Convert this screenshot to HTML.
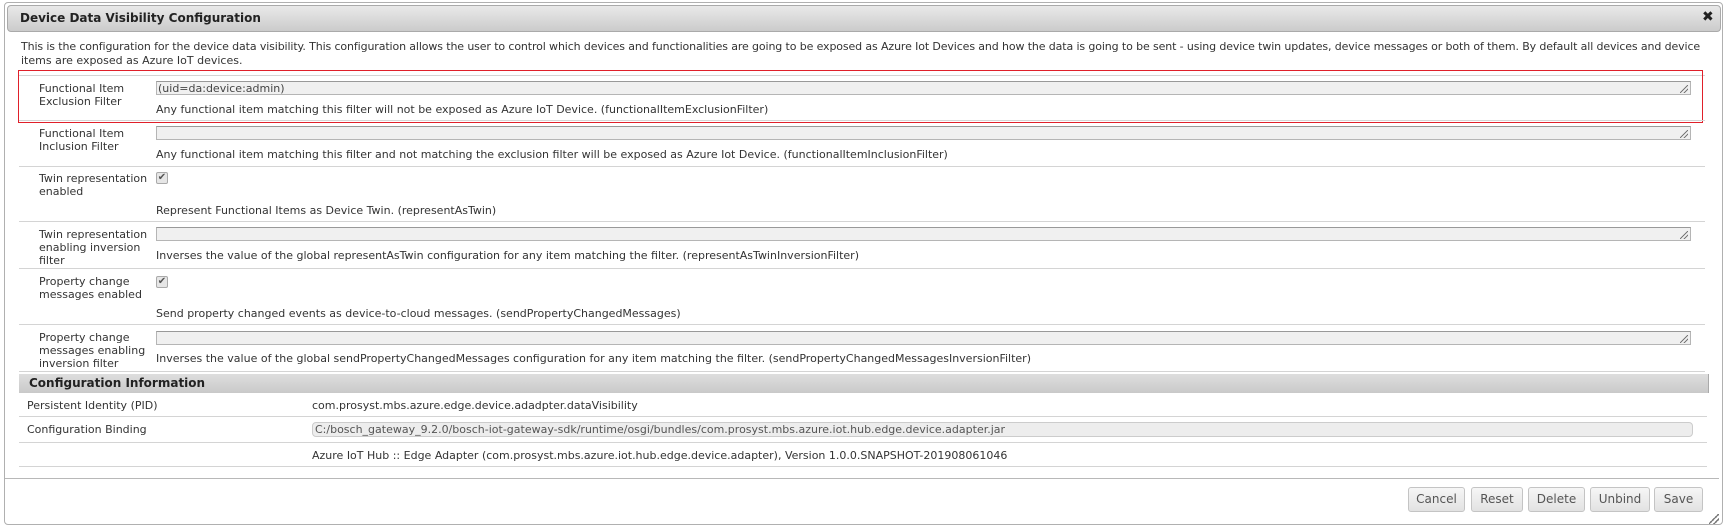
<!DOCTYPE html>
<html><head><meta charset="utf-8"><style>
*{margin:0;padding:0;box-sizing:border-box}
body{width:1725px;height:526px;background:#fff;font-family:"DejaVu Sans","Liberation Sans",sans-serif;font-size:11px;color:#333;position:relative;overflow:hidden}
.a{position:absolute;white-space:nowrap;line-height:13px}
.ln{position:absolute;height:1px;background:#d4d4d4}
.inp{position:absolute;background:#f0f0f0;border:1px solid #b5b5b5;border-top-color:#999;height:14px}
.grip{position:absolute;right:2px;bottom:1px;width:8px;height:8px;background:linear-gradient(135deg,transparent 45%,#777 45%,#777 55%,transparent 55%,transparent 70%,#777 70%,#777 80%,transparent 80%)}
.cb{position:absolute;width:12px;height:12px;border:1px solid #aaa;background:#e6e6e6;border-radius:2px;font-size:10px;line-height:10px;text-align:center;color:#555}
.btn{position:absolute;top:487px;height:25px;border:1px solid #c4c4c4;border-radius:3px;background:linear-gradient(#f6f6f6,#e2e2e2);font-size:12px;line-height:23px;text-align:center;color:#555}
</style></head><body>
<div style="position:absolute;left:4px;top:2px;width:1719px;height:523px;border:1px solid #b0b0b0;border-radius:4px"></div>
<div style="position:absolute;left:7px;top:5px;width:1714px;height:27px;border:1px solid #aaa;border-radius:4px;background:linear-gradient(#e9e9e9,#cbcbcb)"></div>
<div class="a" style="left:20px;top:12px;font-weight:bold;font-size:12px;color:#222">Device Data Visibility Configuration</div>
<div class="a" style="left:1702px;top:11px;font-weight:bold;font-size:14px;color:#222">✖</div>
<div class="a" style="left:21px;top:40px;letter-spacing:-0.12px">This is the configuration for the device data visibility. This configuration allows the user to control which devices and functionalities are going to be exposed as Azure Iot Devices and how the data is going to be sent - using device twin updates, device messages or both of them. By default all devices and device</div>
<div class="a" style="left:21px;top:54px">items are exposed as Azure IoT devices.</div>

<div class="ln" style="left:19px;top:75px;width:1686px"></div>
<div class="a" style="left:39px;top:82px">Functional Item</div>
<div class="a" style="left:39px;top:95px">Exclusion Filter</div>
<div class="inp" style="left:156px;top:81px;width:1535px"><span class="a" style="left:1px;top:0;color:#444">(uid=da:device:admin)</span><div class="grip"></div></div>
<div class="a" style="left:156px;top:103px">Any functional item matching this filter will not be exposed as Azure IoT Device. (functionalItemExclusionFilter)</div>
<div style="position:absolute;left:18px;top:70px;width:1685px;height:53px;border:1px solid #e0202a"></div>
<div class="ln" style="left:19px;top:120px;width:1686px"></div>

<div class="a" style="left:39px;top:127px">Functional Item</div>
<div class="a" style="left:39px;top:140px">Inclusion Filter</div>
<div class="inp" style="left:156px;top:126px;width:1535px"><div class="grip"></div></div>
<div class="a" style="left:156px;top:148px">Any functional item matching this filter and not matching the exclusion filter will be exposed as Azure Iot Device. (functionalItemInclusionFilter)</div>
<div class="ln" style="left:19px;top:166px;width:1686px"></div>

<div class="a" style="left:39px;top:172px">Twin representation</div>
<div class="a" style="left:39px;top:185px">enabled</div>
<div class="cb" style="left:156px;top:172px">✔</div>
<div class="a" style="left:156px;top:204px">Represent Functional Items as Device Twin. (representAsTwin)</div>
<div class="ln" style="left:19px;top:221px;width:1686px"></div>

<div class="a" style="left:39px;top:228px">Twin representation</div>
<div class="a" style="left:39px;top:241px">enabling inversion</div>
<div class="a" style="left:39px;top:254px">filter</div>
<div class="inp" style="left:156px;top:227px;width:1535px"><div class="grip"></div></div>
<div class="a" style="left:156px;top:249px">Inverses the value of the global representAsTwin configuration for any item matching the filter. (representAsTwinInversionFilter)</div>
<div class="ln" style="left:19px;top:268px;width:1686px"></div>

<div class="a" style="left:39px;top:275px">Property change</div>
<div class="a" style="left:39px;top:288px">messages enabled</div>
<div class="cb" style="left:156px;top:276px">✔</div>
<div class="a" style="left:156px;top:307px">Send property changed events as device-to-cloud messages. (sendPropertyChangedMessages)</div>
<div class="ln" style="left:19px;top:324px;width:1686px"></div>

<div class="a" style="left:39px;top:331px">Property change</div>
<div class="a" style="left:39px;top:344px">messages enabling</div>
<div class="a" style="left:39px;top:357px">inversion filter</div>
<div class="inp" style="left:156px;top:331px;width:1535px"><div class="grip"></div></div>
<div class="a" style="left:156px;top:352px">Inverses the value of the global sendPropertyChangedMessages configuration for any item matching the filter. (sendPropertyChangedMessagesInversionFilter)</div>
<div class="ln" style="left:19px;top:371px;width:1686px"></div>

<div style="position:absolute;left:19px;top:374px;width:1690px;height:19px;border-right:1px solid #aaa;background:linear-gradient(#dedede,#c9c9c9)"></div>
<div class="a" style="left:29px;top:377px;font-weight:bold;font-size:12px;color:#222">Configuration Information</div>
<div class="a" style="left:27px;top:399px">Persistent Identity (PID)</div>
<div class="a" style="left:312px;top:399px">com.prosyst.mbs.azure.edge.device.adadpter.dataVisibility</div>
<div class="ln" style="left:19px;top:416px;width:1688px"></div>
<div class="a" style="left:27px;top:423px">Configuration Binding</div>
<div class="inp" style="left:312px;top:422px;width:1381px;height:15px;border-radius:4px;border-color:#ccc;background:#ededed"><span class="a" style="left:2px;top:0;color:#555">C:/bosch_gateway_9.2.0/bosch-iot-gateway-sdk/runtime/osgi/bundles/com.prosyst.mbs.azure.iot.hub.edge.device.adapter.jar</span></div>
<div class="ln" style="left:19px;top:442px;width:1688px"></div>
<div class="a" style="left:312px;top:449px">Azure IoT Hub :: Edge Adapter (com.prosyst.mbs.azure.iot.hub.edge.device.adapter), Version 1.0.0.SNAPSHOT-201908061046</div>
<div class="ln" style="left:19px;top:466px;width:1688px"></div>
<div class="ln" style="left:5px;top:478px;width:1714px;background:#b8b8b8"></div>

<div class="btn" style="left:1408px;width:57px">Cancel</div>
<div class="btn" style="left:1471px;width:52px">Reset</div>
<div class="btn" style="left:1528px;width:57px">Delete</div>
<div class="btn" style="left:1590px;width:60px">Unbind</div>
<div class="btn" style="left:1654px;width:49px">Save</div>
<div class="grip" style="left:1709px;top:514px;right:auto;bottom:auto;width:10px;height:10px"></div>
</body></html>
